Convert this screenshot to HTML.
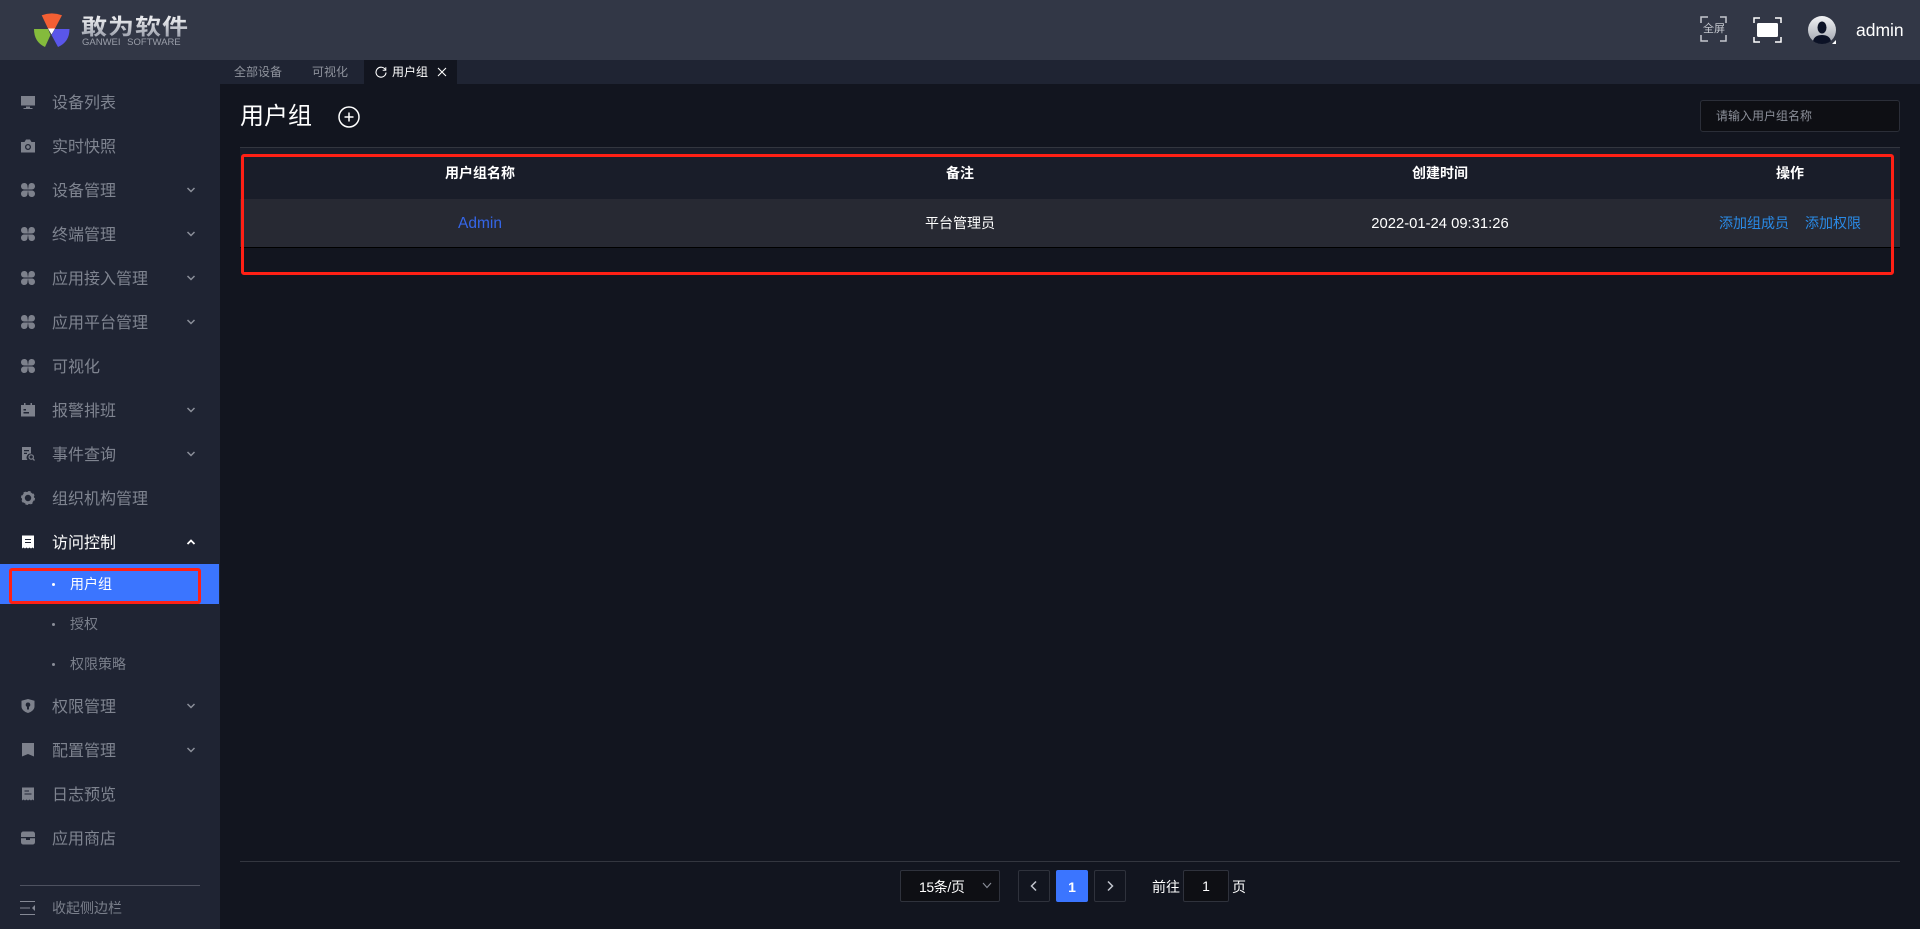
<!DOCTYPE html>
<html lang="zh"><head><meta charset="utf-8"><title>用户组</title>
<style>
*{box-sizing:border-box}
html,body{margin:0;padding:0;width:1920px;height:929px;overflow:hidden;background:#12151f;font-family:"Liberation Sans","Noto Sans CJK SC",sans-serif;color:#fff}
.a{position:absolute;white-space:nowrap}
#head{position:absolute;left:0;top:0;width:1920px;height:60px;background:#323746}
#side{position:absolute;left:0;top:60px;width:220px;height:869px;background:#1f2433}
#tabs{position:absolute;left:220px;top:60px;width:1700px;height:24px;background:#1f2433}
.m{position:absolute;left:52px;font-size:16px;line-height:24px;color:#7f8490;white-space:nowrap;margin-top:1px}
.s{position:absolute;left:70px;font-size:14px;line-height:20px;color:#7a7f8b;white-space:nowrap}
.ic{position:absolute;left:21px;width:14px;height:14px}
.ch{position:absolute;left:184px;width:14px;height:14px}
.dot{position:absolute;left:52px;width:3px;height:3px;background:#8a8e99;border-radius:50%}
.th{position:absolute;top:163px;font-size:14px;font-weight:700;line-height:20px;text-align:center;color:#fff}
.td{position:absolute;top:213px;font-size:14px;line-height:20px;text-align:center;color:#fff;white-space:nowrap}
.pg{position:absolute;top:870px;height:32px;border:1px solid #2f323c;border-radius:2px}
</style></head><body>
<div id="head"></div>
<svg class="a" style="left:30px;top:10px" width="46" height="40" viewBox="30 10 46 40">
<path d="M41.700 15.200Q51.800 11.500 62 15.200L55 28.500H48Z" fill="#f35f33"/>
<path d="M34 29H48L50.500 35L45 47Q34 42 34 29Z" fill="#84bb3c"/>
<path d="M69.500 29H55L51.500 35L58 47Q69.500 42 69.500 29Z" fill="#5a56ea"/>
<path d="M48 28.500H55L51.500 34.500Z" fill="#fff"/>
</svg>
<div class="a" style="left:81px;top:10px;font-size:26px;line-height:34px;font-weight:700;letter-spacing:1px;background:linear-gradient(#e6e7eb 25%,#a6aab5 75%);-webkit-background-clip:text;background-clip:text;color:transparent;transform:scaleY(.86);transform-origin:50% 50%">敢为软件</div>
<div class="a" style="left:82px;top:37px;font-size:9.500px;line-height:12px;color:#9a9ea9;word-spacing:4px">GANWEI SOFTWARE</div>
<svg class="a" style="left:1700px;top:15px" width="28" height="28" viewBox="0 0 28 28" fill="none" stroke="#c4c7ce" stroke-width="1.500"><path d="M1 8V2H8M20 2H26V8M1 20V26H8M20 26H26V20"/></svg>
<div class="a" style="left:1703px;top:21px;font-size:11px;line-height:16px;color:#c4c7ce">全屏</div>
<svg class="a" style="left:1753px;top:16px" width="30" height="28" viewBox="0 0 30 28" fill="none" stroke="#fff" stroke-width="1.500"><path d="M1 7V2H7M22 2H28V7M1 21V26H7M22 26H28V21"/><rect x="4" y="7" width="21" height="14" rx="1.500" fill="#fff" stroke="none"/></svg>
<svg class="a" style="left:1808px;top:16px" width="28" height="28" viewBox="0 0 28 28"><defs><linearGradient id="g" x1="0" y1="0" x2="0" y2="1"><stop offset="0" stop-color="#f2f3f5"/><stop offset="1" stop-color="#9ea3ad"/></linearGradient></defs><circle cx="14" cy="14" r="14" fill="url(#g)"/><ellipse cx="14" cy="11.500" rx="4.500" ry="6" fill="#0c1226"/><path d="M5 25Q6.500 19 14 19Q21.500 19 23 25Q19 28 14 28Q9 28 5 25Z" fill="#0c1226"/><path d="M28 24V28H24Z" fill="#fff"/></svg>
<div class="a" style="left:1856px;top:20px;font-size:17.500px;line-height:20px;color:#fff">admin</div>

<div id="tabs"></div>
<div class="a" style="left:234px;top:64px;font-size:12px;line-height:16px;color:#8f939d">全部设备</div>
<div class="a" style="left:312px;top:64px;font-size:12px;line-height:16px;color:#8f939d">可视化</div>
<div class="a" style="left:364px;top:60px;width:93px;height:24px;background:#12151f"></div>
<svg class="a" style="left:375px;top:66px" width="12" height="12" viewBox="0 0 12 12" fill="none" stroke="#fff" stroke-width="1.100"><path d="M10.500 4A5 5 0 1 0 11 6.500"/><path d="M10.800 1.200V4.300H7.700" stroke-width="1"/></svg>
<div class="a" style="left:392px;top:64px;font-size:12px;line-height:16px;color:#fff">用户组</div>
<svg class="a" style="left:437px;top:67px" width="10" height="10" viewBox="0 0 10 10" stroke="#fff" stroke-width="1.100"><path d="M1 1L9 9M9 1L1 9"/></svg>

<div id="side"></div>
<svg class="ic" style="top:96px" viewBox="0 0 14 14" fill="#7d818c"><path d="M0 0H14V9.500H0ZM5 10.500H9V12H11.500V13H2.500V12H5Z"/></svg>
<div class="m" style="top:91px">设备列表</div>
<svg class="ic" style="top:139px" viewBox="0 0 14 14" fill="#7d818c"><path fill-rule="evenodd" d="M0 3H3.500L5 .5H9L10.500 3H14V13.500H0ZM7 5A3 3 0 1 0 7 11A3 3 0 0 0 7 5ZM7 6.300A1.700 1.700 0 1 1 7 9.700A1.700 1.700 0 0 1 7 6.300Z"/></svg>
<div class="m" style="top:135px">实时快照</div>
<svg class="ic" style="top:183px" viewBox="0 0 14 14" fill="#7d818c"><path id="clover" d="M3.300 0C5.200 0 6.500 1.300 6.500 3.200L7 6.500L3.300 6.500C1.400 6.500 0 5.200 0 3.300C0 1.400 1.400 0 3.300 0ZM10.700 0C12.600 0 14 1.400 14 3.300C14 5.200 12.600 6.500 10.700 6.500L7 6.500L7.500 3.200C7.500 1.300 8.800 0 10.700 0ZM3.300 14C1.400 14 0 12.600 0 10.700C0 8.800 1.400 7.500 3.300 7.500L7 7.500L6.500 10.800C6.500 12.700 5.200 14 3.300 14ZM10.700 14C8.800 14 7.500 12.700 7.500 10.800L7 7.500L10.700 7.500C12.600 7.500 14 8.800 14 10.700C14 12.600 12.600 14 10.700 14Z"/></svg>
<div class="m" style="top:179px">设备管理</div>
<svg class="ic" style="top:227px" viewBox="0 0 14 14" fill="#7d818c"><use href="#clover"/></svg>
<div class="m" style="top:223px">终端管理</div>
<svg class="ic" style="top:271px" viewBox="0 0 14 14" fill="#7d818c"><use href="#clover"/></svg>
<div class="m" style="top:267px">应用接入管理</div>
<svg class="ic" style="top:315px" viewBox="0 0 14 14" fill="#7d818c"><use href="#clover"/></svg>
<div class="m" style="top:311px">应用平台管理</div>
<svg class="ic" style="top:359px" viewBox="0 0 14 14" fill="#7d818c"><use href="#clover"/></svg>
<div class="m" style="top:355px">可视化</div>
<svg class="ic" style="top:403px" viewBox="0 0 14 14" fill="#7d818c"><path fill-rule="evenodd" d="M3 0H4.500V2H9.500V0H11V2H14V13.500H0V2H3ZM2.500 6H5V7.500H2.500ZM2.500 9H8V10.500H2.500Z"/></svg>
<div class="m" style="top:399px">报警排班</div>
<svg class="ic" style="top:447px" viewBox="0 0 14 14" fill="#7d818c"><path fill-rule="evenodd" d="M1 0H10V6.500A4 4 0 0 0 6.500 13H1ZM3 3V4.200H8V3ZM3 5.800V7H6V5.800Z"/><circle cx="10.200" cy="10" r="2.200" fill="none" stroke="#7d818c" stroke-width="1.200"/><path d="M11.800 11.600L13.500 13.500" stroke="#7d818c" stroke-width="1.300"/></svg>
<div class="m" style="top:443px">事件查询</div>
<svg class="ic" style="top:491px" viewBox="0 0 14 14"><circle cx="7" cy="7" r="4.700" fill="none" stroke="#7d818c" stroke-width="3"/><circle cx="7" cy="7" r="6.300" fill="none" stroke="#7d818c" stroke-width="1.400" stroke-dasharray="2.500 2.450"/></svg>
<div class="m" style="top:487px">组织机构管理</div>
<svg class="ic" style="top:535px" viewBox="0 0 14 14" fill="#fff"><path fill-rule="evenodd" d="M1 .5H13V13.500L11.500 12.500L10 13.500L8.500 12.500L7 13.500L5.500 12.500L4 13.500L2.500 12.500L1 13.500ZM4 4V5H10V4ZM4 7V8H10V7Z"/></svg>
<div class="m" style="top:531px;color:#fff">访问控制</div>
<div class="a" style="left:0;top:564px;width:219px;height:40px;background:#3b75ff"></div>
<div class="dot" style="top:583px;background:#fff"></div>
<div class="s" style="top:574px;color:#fff">用户组</div>
<div class="dot" style="top:623px"></div>
<div class="s" style="top:614px">授权</div>
<div class="dot" style="top:663px"></div>
<div class="s" style="top:654px">权限策略</div>
<svg class="ic" style="top:699px" viewBox="0 0 14 14" fill="#7d818c"><path fill-rule="evenodd" d="M7 0L13.500 1.800V7.500C13.500 10.500 10.500 13 7 14C3.500 13 .5 10.500 .5 7.500V1.800ZM7 3.500A2.200 2.200 0 0 0 6 7.700V10.500H8V7.700A2.200 2.200 0 0 0 7 3.500Z"/></svg>
<div class="m" style="top:695px">权限管理</div>
<svg class="ic" style="top:743px" viewBox="0 0 14 14" fill="#7d818c"><path d="M1 0H13V13.500L7 11L1 13.500Z"/></svg>
<div class="m" style="top:739px">配置管理</div>
<svg class="ic" style="top:787px" viewBox="0 0 14 14" fill="#7d818c"><path fill-rule="evenodd" d="M1 .5H13V13.500L11.500 12.500L10 13.500L8.500 12.500L7 13.500L5.500 12.500L4 13.500L2.500 12.500L1 13.500ZM3.500 3.500V4.500H8V3.500ZM3.500 6.500V7.500H10.500V6.500Z"/></svg>
<div class="m" style="top:783px">日志预览</div>
<svg class="ic" style="top:831px" viewBox="0 0 14 14" fill="#7d818c"><path d="M2.500 .5H11.500C13 .5 14 1.500 14 3V6H0V3C0 1.500 1 .5 2.500 .5ZM0 7.200H5V9H9V7.200H14V11C14 12.500 13 13.500 11.500 13.500H2.500C1 13.500 0 12.500 0 11Z"/></svg>
<div class="m" style="top:827px">应用商店</div>
<svg class="ch" style="top:183px" viewBox="0 0 14 14" fill="none" stroke="#8a8e99" stroke-width="1.500"><path id="chev" d="M3.500 5L7 8.500L10.500 5"/></svg>
<svg class="ch" style="top:227px" viewBox="0 0 14 14" fill="none" stroke="#8a8e99" stroke-width="1.500"><use href="#chev"/></svg>
<svg class="ch" style="top:271px" viewBox="0 0 14 14" fill="none" stroke="#8a8e99" stroke-width="1.500"><use href="#chev"/></svg>
<svg class="ch" style="top:315px" viewBox="0 0 14 14" fill="none" stroke="#8a8e99" stroke-width="1.500"><use href="#chev"/></svg>
<svg class="ch" style="top:403px" viewBox="0 0 14 14" fill="none" stroke="#8a8e99" stroke-width="1.500"><use href="#chev"/></svg>
<svg class="ch" style="top:447px" viewBox="0 0 14 14" fill="none" stroke="#8a8e99" stroke-width="1.500"><use href="#chev"/></svg>
<svg class="ch" style="top:535px" viewBox="0 0 14 14" fill="none" stroke="#fff" stroke-width="1.800"><path d="M3.500 9L7 5.500L10.500 9"/></svg>
<svg class="ch" style="top:699px" viewBox="0 0 14 14" fill="none" stroke="#8a8e99" stroke-width="1.500"><use href="#chev"/></svg>
<svg class="ch" style="top:743px" viewBox="0 0 14 14" fill="none" stroke="#8a8e99" stroke-width="1.500"><use href="#chev"/></svg>
<div class="a" style="left:20px;top:885px;width:180px;height:1px;background:#4e5260"></div>
<svg class="a" style="left:20px;top:901px" width="16" height="14" viewBox="0 0 16 14" fill="none" stroke="#858995"><path d="M0 .5H15M0 7H10M0 13.500H15"/><path d="M15 4V10L12 7Z" fill="#858995" stroke="none"/></svg>
<div class="a" style="left:52px;top:898px;font-size:14px;line-height:20px;color:#7a7f8b">收起侧边栏</div>

<div class="a" style="left:240px;top:99px;font-size:24px;line-height:36px;color:#fff">用户组</div>
<svg class="a" style="left:338px;top:106px" width="22" height="22" viewBox="0 0 22 22" fill="none" stroke="#fff" stroke-width="1.500"><circle cx="11" cy="11" r="10"/><path d="M11 6.500V15.500M6.500 11H15.500"/></svg>
<div class="a" style="left:1700px;top:100px;width:200px;height:32px;background:#0e0f14;border:1px solid #2b2e38;border-radius:3px"></div>
<div class="a" style="left:1716px;top:108px;font-size:12px;line-height:16px;color:#8b8f99">请输入用户组名称</div>
<div class="a" style="left:240px;top:147px;width:1660px;height:1px;background:#33363f"></div>
<div class="a" style="left:240px;top:148px;width:1660px;height:51px;background:#191d29"></div>
<div class="a" style="left:240px;top:199px;width:1660px;height:48px;background:#272933"></div>
<div class="a" style="left:240px;top:247px;width:1660px;height:1px;background:#000"></div>
<div class="th" style="left:240px;width:480px">用户组名称</div>
<div class="th" style="left:720px;width:480px">备注</div>
<div class="th" style="left:1200px;width:480px">创建时间</div>
<div class="th" style="left:1680px;width:220px">操作</div>
<div class="td" style="left:240px;width:480px;color:#3566e8;font-size:15.500px;margin-top:1px">Admin</div>
<div class="td" style="left:720px;width:480px">平台管理员</div>
<div class="td" style="left:1200px;width:480px;font-size:14.800px;margin-top:1px">2022-01-24 09:31:26</div>
<div class="a" style="left:1719px;top:213px;font-size:14px;line-height:20px;color:#2a8ae6">添加组成员</div>
<div class="a" style="left:1805px;top:213px;font-size:14px;line-height:20px;color:#2a8ae6">添加权限</div>
<div class="a" style="left:241px;top:154px;width:1653px;height:121px;border:3px solid #ff2015;border-radius:3px"></div>
<div class="a" style="left:9px;top:568px;width:192px;height:36px;border:3px solid #ff2015;border-radius:3px"></div>

<div class="a" style="left:240px;top:861px;width:1660px;height:1px;background:#33363f"></div>
<div class="pg" style="left:900px;width:100px;background:#0e0f14"></div>
<div class="a" style="left:919px;top:877px;font-size:14px;line-height:20px;color:#fff;letter-spacing:-.4px">15条/页</div>
<svg class="a" style="left:981px;top:881px" width="12" height="10" viewBox="0 0 12 10" fill="none" stroke="#8a8e99" stroke-width="1.100"><path d="M2 2L6 6.500L10 2"/></svg>
<div class="pg" style="left:1018px;width:32px"></div>
<svg class="a" style="left:1029px;top:880px" width="10" height="12" viewBox="0 0 10 12" fill="none" stroke="#c0c4cc" stroke-width="1.500"><path d="M7 1.500L2.500 6L7 10.500"/></svg>
<div class="pg" style="left:1056px;width:32px;background:#3b75ff;border-color:#3b75ff;font-size:14px;font-weight:700;line-height:32px;text-align:center;color:#fff">1</div>
<div class="pg" style="left:1094px;width:32px"></div>
<svg class="a" style="left:1105px;top:880px" width="10" height="12" viewBox="0 0 10 12" fill="none" stroke="#c0c4cc" stroke-width="1.500"><path d="M3 1.500L7.500 6L3 10.500"/></svg>
<div class="a" style="left:1152px;top:877px;font-size:14px;line-height:20px;color:#fff">前往</div>
<div class="pg" style="left:1183px;width:46px;background:#0e0f14;font-size:14px;line-height:30px;text-align:center;color:#fff">1</div>
<div class="a" style="left:1232px;top:877px;font-size:14px;line-height:20px;color:#fff">页</div>
</body></html>
